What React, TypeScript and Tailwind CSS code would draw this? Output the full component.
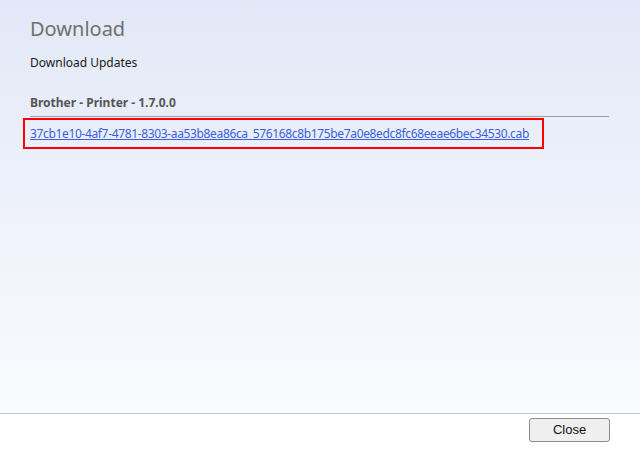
export default function App() {
  return (
    <div
      className="w-[640px] h-[459px] flex flex-col text-[12px] text-[#1a1a1a]"
      style={{ fontFamily: '"Segoe UI", "Noto Sans", sans-serif' }}
    >
      <div className="flex-1 bg-gradient-to-b from-[#e2e8f7] to-[#fafbfe] px-[30px] pt-[16px]">
        <h1 className="text-[20px] leading-[26px] text-[#707070]">Download</h1>
        <p className="mt-[13px] leading-[16px]">Download Updates</p>
        <div className="mt-[24px] mr-[1px] border-b border-[#a0a0a0] pb-[5px] font-bold text-[#555] leading-[16px]">
          Brother - Printer - 1.7.0.0
        </div>
        <div className="-ml-[7px] mt-[1px] w-[521px] h-[31px] border-2 border-[#ff0000] flex items-center pl-[5px]">
          <a href="#" className="text-[#3a5ee0] underline leading-[16px] whitespace-nowrap tracking-[-0.35px]">
            37cb1e10-4af7-4781-8303-aa53b8ea86ca_576168c8b175be7a0e8edc8fc68eeae6bec34530.cab
          </a>
        </div>
      </div>
      <div className="h-[46px] border-t border-[#c8c8c8] bg-white flex justify-end items-start pt-[4px] pr-[30px]">
        <button
          className="w-[81px] h-[24px] border border-[#8c8c8c] rounded-[3px] bg-[#efefef] text-[13px] text-[#111]"
          style={{ fontFamily: '"Liberation Sans", Arial, sans-serif' }}
        >
          Close
        </button>
      </div>
    </div>
  );
}
